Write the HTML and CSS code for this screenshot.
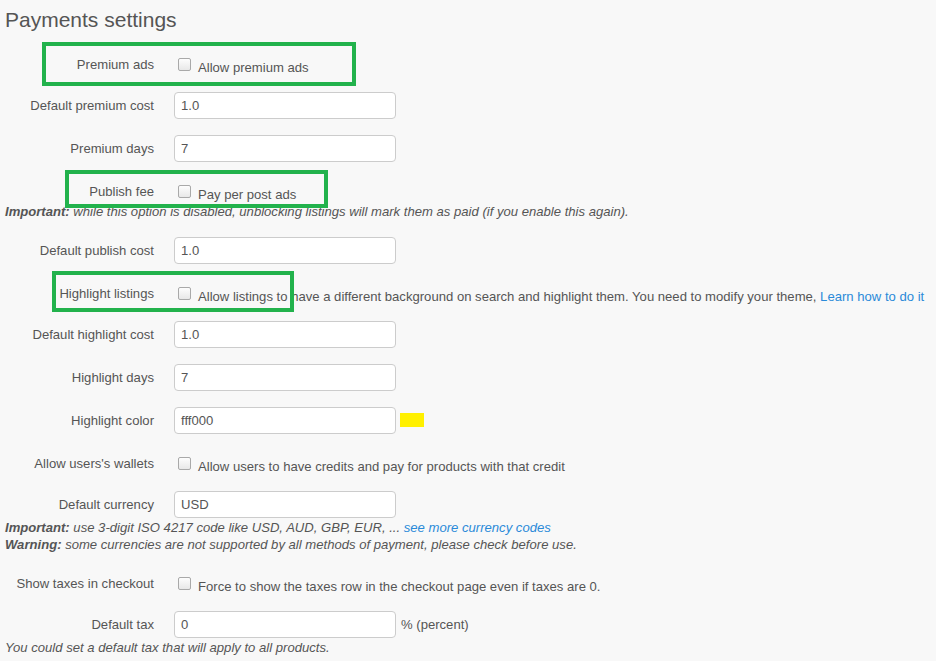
FILE: index.html
```html
<!DOCTYPE html>
<html>
<head>
<meta charset="utf-8">
<link rel="stylesheet" href="styles.css">
</head>
<body>
<div class="page">
  <h1 class="title">Payments settings</h1>

  <div class="row row-check r-premium">
    <div class="label">Premium ads</div>
    <div class="control"><span class="cb"></span><span class="cb-text">Allow premium ads</span></div>
  </div>
  <div class="row row-input g14">
    <div class="label">Default premium cost</div>
    <div class="control"><div class="input">1.0</div></div>
  </div>
  <div class="row row-input g16">
    <div class="label">Premium days</div>
    <div class="control"><div class="input">7</div></div>
  </div>

  <div class="row row-check r-publish">
    <div class="label">Publish fee</div>
    <div class="control"><span class="cb"></span><span class="cb-text">Pay per post ads</span></div>
  </div>
  <p class="note n-publish"><b>Important:</b> while this option is disabled, unblocking listings will mark them as paid (if you enable this again).</p>

  <div class="row row-input g16">
    <div class="label">Default publish cost</div>
    <div class="control"><div class="input">1.0</div></div>
  </div>

  <div class="row row-check r-highlight">
    <div class="label">Highlight listings</div>
    <div class="control"><span class="cb"></span><span class="cb-text">Allow listings to have a different background on search and highlight them. You need to modify your theme, <a class="link" href="#">Learn how to do it</a></span></div>
  </div>
  <div class="row row-input g14">
    <div class="label">Default highlight cost</div>
    <div class="control"><div class="input">1.0</div></div>
  </div>
  <div class="row row-input g16">
    <div class="label">Highlight days</div>
    <div class="control"><div class="input">7</div></div>
  </div>
  <div class="row row-input g16">
    <div class="label">Highlight color</div>
    <div class="control"><div class="input">fff000</div><span class="swatch"></span></div>
  </div>

  <div class="row row-check r-wallets">
    <div class="label">Allow users's wallets</div>
    <div class="control"><span class="cb"></span><span class="cb-text">Allow users to have credits and pay for products with that credit</span></div>
  </div>
  <div class="row row-input g14">
    <div class="label">Default currency</div>
    <div class="control"><div class="input">USD</div></div>
  </div>
  <p class="note n-currency"><b>Important:</b> use 3-digit ISO 4217 code like USD, AUD, GBP, EUR, ... <a class="link" href="#">see more currency codes</a><br><b>Warning:</b> some currencies are not supported by all methods of payment, please check before use.</p>

  <div class="row row-check r-taxes">
    <div class="label">Show taxes in checkout</div>
    <div class="control"><span class="cb"></span><span class="cb-text">Force to show the taxes row in the checkout page even if taxes are 0.</span></div>
  </div>
  <div class="row row-input g14">
    <div class="label">Default tax</div>
    <div class="control"><div class="input">0</div><span class="suffix">% (percent)</span></div>
  </div>
  <p class="note n-tax">You could set a default tax that will apply to all products.</p>

  <div class="mark m1"></div>
  <div class="mark m2"></div>
  <div class="mark m3"></div>
</div>
</body>
</html>
```

FILE: styles.css
```css
html, body {
  margin: 0;
  padding: 0;
  background: #f8f8f8;
}
body {
  font-family: "Liberation Sans", Arial, sans-serif;
  font-size: 13.1px;
  color: #555;
  width: 936px;
  height: 661px;
  overflow: hidden;
}
.page {
  position: relative;
  padding-top: 8px;
}
.title {
  margin: 0 0 0 5px;
  font-size: 21px;
  line-height: 24px;
  font-weight: normal;
  color: #555;
}
.row {
  display: flex;
  align-items: flex-start;
  height: 27px;
}
.label {
  width: 154px;
  flex: none;
  text-align: right;
  line-height: 27px;
  white-space: nowrap;
}
.control {
  margin-left: 20px;
  display: flex;
  align-items: flex-start;
  white-space: nowrap;
}
.row-check .control {
  margin-left: 24px;
}
.cb {
  width: 11px;
  height: 11px;
  margin-top: 7px;
  border: 1px solid #a9a9a9;
  border-radius: 2px;
  background: linear-gradient(#fdfdfd, #e8e8e8);
  flex: none;
}
.cb-text {
  margin-left: 7px;
  padding-top: 3px;
  line-height: 27px;
}
.input {
  width: 214px;
  height: 25px;
  line-height: 25px;
  padding-left: 6px;
  border: 1px solid #ccc;
  border-radius: 4px;
  background: #fff;
  color: #555;
}
.swatch {
  width: 24px;
  height: 14px;
  margin-left: 4px;
  margin-top: 6px;
  background: #fff000;
}
.suffix {
  margin-left: 5px;
  line-height: 27px;
}
.link {
  color: #2a8ad9;
  text-decoration: none;
}
.note {
  margin: 0 0 0 5px;
  font-style: italic;
  line-height: 17px;
}
.note b {
  font-weight: bold;
}
.g14 { margin-top: 14px; }
.g16 { margin-top: 16px; }
.r-premium { margin-top: 19px; }
.r-publish { margin-top: 16px; height: 25px; }
.n-publish { margin-top: 0; line-height: 18px; }
.r-highlight { margin-top: 16px; }
.r-wallets { margin-top: 16px; }
.n-currency { margin-top: 1px; }
.r-taxes { margin-top: 17px; }
.n-tax { margin-top: 1px; }

.mark {
  position: absolute;
  border: 4px solid #22b24c;
  box-sizing: border-box;
}
.m1 { left: 42px; top: 42px; width: 314px; height: 44px; }
.m2 { left: 65px; top: 170px; width: 263px; height: 38px; }
.m3 { left: 52px; top: 271px; width: 242px; height: 41px; }
```
